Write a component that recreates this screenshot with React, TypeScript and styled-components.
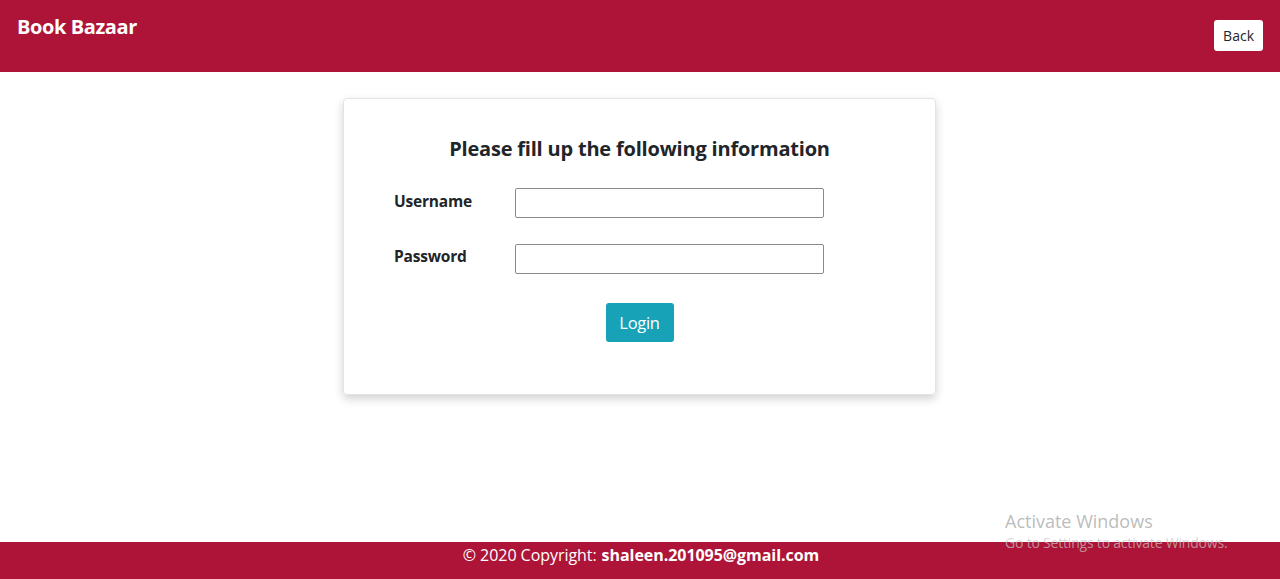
import styled, {createGlobalStyle} from "styled-components";

const GlobalStyle = createGlobalStyle`
    html, body {
        margin: 0;
        padding: 0;
        height: 100%;
    }
    body {
        font-family: "Open Sans", "Noto Sans", sans-serif;
        color: #212529;
        background: #fff;
    }
    * {
        box-sizing: border-box;
    }
`;

const Page = styled.div`
    display: flex;
    flex-direction: column;
    height: 579px;
    position: relative;
    overflow: hidden;
`;

const Header = styled.header`
    height: 72px;
    background: #ae1437;
    display: flex;
    justify-content: space-between;
    align-items: flex-start;
    padding: 0 16px 0 17px;
    flex-shrink: 0;
`;

const Brand = styled.h1`
    margin: 13px 0 0;
    color: #fff;
    font-size: 20px;
    font-weight: 700;
    letter-spacing: -0.4px;
`;

const BackButton = styled.button`
    margin-top: 20px;
    margin-right: 1px;
    height: 31px;
    padding: 0 9px;
    background: #fff;
    border: none;
    border-radius: 3px;
    font-family: inherit;
    font-size: 14px;
    color: #212529;
`;

const Main = styled.main`
    flex: 1;
    display: flex;
    justify-content: center;
    align-items: flex-start;
    padding-top: 26px;
    padding-right: 1px;
`;

const Card = styled.div`
    width: 593px;
    height: 297px;
    border: 1px solid #e3e3e3;
    border-radius: 4px;
    box-shadow: 0 4px 10px rgba(0, 0, 0, 0.18);
    padding: 36px 50px 0;
    display: flex;
    flex-direction: column;
`;

const Title = styled.h2`
    margin: 0 0 26px;
    text-align: center;
    font-size: 20px;
    font-weight: 700;
    letter-spacing: -0.2px;
`;

const Field = styled.div`
    display: grid;
    grid-template-columns: 121px 309px;
    align-items: center;
    height: 30px;
    margin-bottom: 26px;
`;

const Label = styled.label<{offset: number}>`
    font-size: 15.5px;
    font-weight: 700;
    letter-spacing: -0.2px;
    margin-top: ${(p) => p.offset}px;
`;

const Input = styled.input`
    width: 309px;
    height: 30px;
    border: 1px solid #8a8a8a;
    border-radius: 2px;
    padding: 2px 6px;
    font-family: inherit;
`;

const Actions = styled.div`
    display: flex;
    justify-content: center;
    margin-top: 3px;
`;

const LoginButton = styled.button`
    width: 68px;
    height: 39px;
    background: #17a2b8;
    color: #fff;
    border: none;
    border-radius: 3px;
    font-family: inherit;
    font-size: 16.5px;
    letter-spacing: -0.3px;
`;

const Footer = styled.footer`
    height: 37px;
    background: #ae1437;
    color: #fff;
    display: flex;
    justify-content: center;
    align-items: center;
    font-size: 16px;
    letter-spacing: -0.05px;
    padding-bottom: 12px;
    padding-left: 2px;
    flex-shrink: 0;
`;

const Email = styled.strong`
    font-weight: 700;
    margin-left: 5px;
`;

const Watermark = styled.div`
    position: absolute;
    left: 1005px;
    top: 510px;
    color: rgba(170, 170, 170, 0.8);
    pointer-events: none;
`;

const WatermarkTitle = styled.div`
    font-size: 18px;
    line-height: 23px;
`;

const WatermarkText = styled.div`
    font-size: 14px;
    line-height: 20px;
    color: rgba(200, 200, 200, 0.7);
    letter-spacing: -0.2px;
`;

const App = () => {
    return (
        <Page>
            <GlobalStyle />
            <Header>
                <Brand>Book Bazaar</Brand>
                <BackButton>Back</BackButton>
            </Header>
            <Main>
                <Card>
                    <Title>Please fill up the following information</Title>
                    <Field>
                        <Label offset={-4}>Username</Label>
                        <Input type="text" />
                    </Field>
                    <Field>
                        <Label offset={-6}>Password</Label>
                        <Input type="password" />
                    </Field>
                    <Actions>
                        <LoginButton>Login</LoginButton>
                    </Actions>
                </Card>
            </Main>
            <Footer>
                © 2020 Copyright:<Email>shaleen.201095@gmail.com</Email>
            </Footer>
            <Watermark>
                <WatermarkTitle>Activate Windows</WatermarkTitle>
                <WatermarkText>Go to Settings to activate Windows.</WatermarkText>
            </Watermark>
        </Page>
    );
};

export default App;
